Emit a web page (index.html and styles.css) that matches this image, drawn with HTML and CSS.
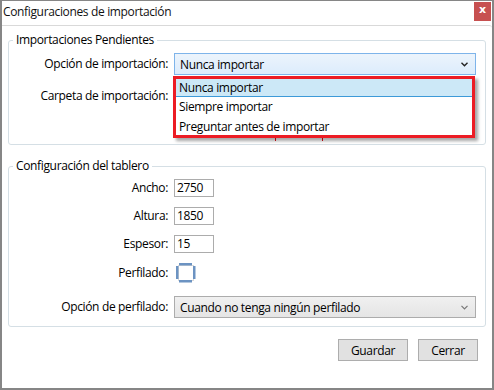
FILE: index.html
```html
<!DOCTYPE html>
<html lang="es">
<head>
<meta charset="utf-8">
<title>Configuraciones de importación</title>
<link rel="stylesheet" href="styles.css">
</head>
<body>
<div class="window">
  <div class="titlebar">
    <span class="title">Configuraciones de importación</span>
    <span class="close">x</span>
  </div>
  <div class="content">
    <fieldset class="group group-import">
      <legend>Importaciones Pendientes</legend>
      <div class="row row-first">
        <label class="lbl">Opción de importación:</label>
        <div class="combo combo-active">
          <span>Nunca importar</span>
          <svg class="chev" width="7" height="5" viewBox="0 0 7 5"><path d="M0.5 0.8 L3.5 3.8 L6.5 0.8" fill="none" stroke="#222" stroke-width="1.4"/></svg>
        </div>
      </div>
      <div class="row row-gap">
        <label class="lbl">Carpeta de importación:</label>
        <div class="folder"></div>
      </div>
      <div class="row row-gap">
        <span></span>
        <div class="marker-wrap"><div class="marker"></div></div>
      </div>
      <div class="popup">
        <div class="item item-sel">Nunca importar</div>
        <div class="item">Siempre importar</div>
        <div class="item">Preguntar antes de importar</div>
      </div>
    </fieldset>

    <fieldset class="group group-board">
      <legend>Configuración del tablero</legend>
      <div class="row row-first">
        <label class="lbl">Ancho:</label>
        <div class="input">2750</div>
      </div>
      <div class="row row-gap">
        <label class="lbl">Altura:</label>
        <div class="input">1850</div>
      </div>
      <div class="row row-gap">
        <label class="lbl">Espesor:</label>
        <div class="input">15</div>
      </div>
      <div class="row row-gap row-check">
        <label class="lbl">Perfilado:</label>
        <svg class="check" width="20" height="20" viewBox="0 0 20 20">
          <rect x="2.5" y="2.5" width="15" height="15" fill="#fff" stroke="#d9d9d9" stroke-width="1"/>
          <rect x="3" y="0" width="13" height="2.5" fill="#6c93c2"/>
          <rect x="3" y="17" width="13" height="2.5" fill="#6c93c2"/>
          <rect x="0" y="3" width="2.5" height="13" fill="#6c93c2"/>
          <rect x="17" y="3" width="2.5" height="13" fill="#6c93c2"/>
        </svg>
      </div>
      <div class="row row-gap2">
        <label class="lbl">Opción de perfilado:</label>
        <div class="combo combo-normal">
          <span>Cuando no tenga ningún perfilado</span>
          <svg class="chev" width="7" height="5" viewBox="0 0 7 5"><path d="M0.5 0.8 L3.5 3.8 L6.5 0.8" fill="none" stroke="#777" stroke-width="1.2"/></svg>
        </div>
      </div>
    </fieldset>

    <div class="buttons">
      <button class="btn btn-save">Guardar</button>
      <button class="btn btn-close">Cerrar</button>
    </div>
  </div>
</div>
</body>
</html>
```

FILE: styles.css
```css
* { box-sizing: border-box; }
html, body {
  margin: 0;
  padding: 0;
  background: #fff;
}
body {
  font-family: "Open Sans", "Noto Sans", sans-serif;
  font-size: 12px;
  letter-spacing: -0.35px;
  color: #000;
}
.window {
  width: 494px;
  height: 390px;
  border: 2px solid #868686;
  border-top: 1px solid #868686;
  background: #fff;
  display: flex;
  flex-direction: column;
}
.titlebar {
  height: 24px;
  display: flex;
  justify-content: space-between;
  align-items: flex-start;
  padding-left: 1px;
}
.title {
  line-height: 22px;
  font-size: 12px;
  color: #111;
}
.close {
  width: 17px;
  height: 19px;
  margin-top: 1px;
  margin-right: 1px;
  background: #c75050;
  color: #fff;
  font-weight: bold;
  font-size: 11px;
  line-height: 16px;
  text-align: center;
  letter-spacing: 0;
  font-family: "DejaVu Sans", sans-serif;
}
.content {
  flex: 1;
  border-top: 1px solid #d9d9d9;
  border-top-right-radius: 3px;
  display: flex;
  flex-direction: column;
}
.group {
  position: relative;
  margin: 6px 6px 0 6px;
  padding: 0 9px 3px 0;
  border: 1px solid #d5dfe5;
  border-radius: 3px;
  min-width: 0;
}
.group legend {
  margin-left: 4px;
  padding: 0 3px;
  line-height: 16px;
  font-size: 12px;
}
.group-board {
  margin-top: 13px;
  padding-bottom: 8px;
}
.row {
  display: grid;
  grid-template-columns: 159px 302px;
  column-gap: 6px;
  align-items: center;
}
.row-first { margin-top: 5px; }
.row-gap { margin-top: 10px; }
.row-gap2 { margin-top: 13px; }
.lbl {
  text-align: right;
  line-height: 16px;
}
.combo {
  height: 22px;
  display: flex;
  align-items: center;
  justify-content: space-between;
  padding: 0 7px 0 5px;
  border: 1px solid #acacac;
}
.combo-active {
  background: linear-gradient(#ecf4fc, #dcecfc);
  border-color: #7eb4ea;
}
.combo-normal {
  background: linear-gradient(#f0f0f0, #e5e5e5);
}
.chev { display: block; }
.folder { height: 22px; }
.marker-wrap {
  height: 24px;
  padding-left: 101px;
}
.marker {
  width: 48px;
  height: 24px;
  border-left: 1px solid #e0101c;
  border-right: 1px solid #e0101c;
}
.popup {
  position: absolute;
  left: 164px;
  top: 28px;
  width: 302px;
  height: 62px;
  border: 3px solid #ec1c24;
  background: #fff;
  overflow: hidden;
  box-shadow: 3px 3px 3px rgba(0, 0, 0, 0.35);
}
.item {
  height: 20px;
  line-height: 20px;
  padding-left: 3px;
  white-space: nowrap;
}
.item-sel {
  margin-top: -1px;
  background: #cce8f7;
  border-bottom: 1px solid #3d9ad8;
  height: 19px;
  line-height: 19px;
}
.input {
  width: 40px;
  height: 18px;
  border: 1px solid #acacac;
  padding: 0 2px;
  line-height: 16px;
  background: #fff;
}
.row-check { height: 20px; }
.check {
  display: block;
  margin-left: 2px;
}
.buttons {
  margin-top: 12px;
  padding-right: 14px;
  display: flex;
  justify-content: flex-end;
  gap: 10px;
}
.btn {
  height: 22px;
  border: 1px solid #adadad;
  background: #e1e1e1;
  font-family: inherit;
  font-size: 12px;
  letter-spacing: -0.35px;
  color: #000;
  padding: 0;
}
.btn-save { width: 70px; }
.btn-close { width: 60px; }
```
